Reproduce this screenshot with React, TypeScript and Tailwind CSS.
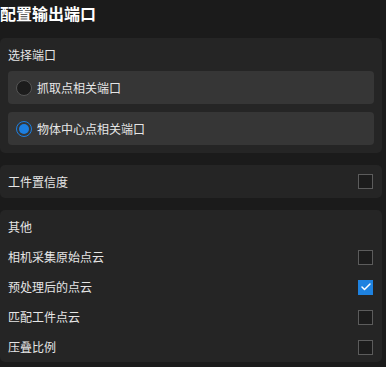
import { Check } from "lucide-react";

const font = { fontFamily: '"Noto Sans CJK SC", "Noto Sans", sans-serif' };

function Radio({ label, checked }: { label: string; checked?: boolean }) {
  return (
    <div className="flex h-[33px] items-center gap-[5px] rounded-[4px] bg-[#363636] pl-[8px]">
      {checked ? (
        <span className="flex h-[16px] w-[16px] items-center justify-center rounded-full border-[1.5px] border-[#1d7fe0]">
          <span className="h-[10px] w-[10px] rounded-full bg-[#1d7fe0]" />
        </span>
      ) : (
        <span className="h-[16px] w-[16px] rounded-full border border-[#555] bg-[#1c1c1c]" />
      )}
      <span className="text-[12px] text-[#e6e6e6]">{label}</span>
    </div>
  );
}

function Box({ checked }: { checked?: boolean }) {
  return checked ? (
    <span className="flex h-[15px] w-[15px] items-center justify-center bg-[#1e82e0]">
      <Check size={12} strokeWidth={3} className="text-white" />
    </span>
  ) : (
    <span className="h-[15px] w-[15px] border border-[#5c5c5c] bg-[#1c1c1c]" />
  );
}

function Row({ label, checked, box = true }: { label: string; checked?: boolean; box?: boolean }) {
  return (
    <div className="flex h-[30px] items-center justify-between pl-[8px] pr-[9px]">
      <span className="text-[12px] text-[#e6e6e6]">{label}</span>
      {box && <Box checked={checked} />}
    </div>
  );
}

export default function App() {
  return (
    <div className="h-[367px] w-[386px] overflow-hidden bg-[#1b1b1b] pr-[4px]" style={font}>
      <div className="flex h-[38px] items-start">
        <h1 className="mt-[1px] text-[16px] font-bold leading-[24px] text-white">配置输出端口</h1>
      </div>

      <div className="rounded-[5px] bg-[#252525] px-[8px] pb-[8px] pt-[7px]">
        <div className="mb-[6px] h-[20px] text-[12px] leading-[20px] text-[#e6e6e6]">选择端口</div>
        <div className="flex flex-col gap-[8px]">
          <Radio label="抓取点相关端口" />
          <Radio label="物体中心点相关端口" checked />
        </div>
      </div>

      <div className="mt-[12px] flex h-[33px] items-center justify-between rounded-[5px] bg-[#252525] pl-[8px] pr-[9px]">
        <span className="text-[12px] text-[#e6e6e6]">工件置信度</span>
        <Box />
      </div>

      <div className="mt-[12px] rounded-[5px] bg-[#252525] pt-[2px]">
        <Row label="其他" box={false} />
        <Row label="相机采集原始点云" />
        <Row label="预处理后的点云" checked />
        <Row label="匹配工件点云" />
        <Row label="压叠比例" />
      </div>
    </div>
  );
}
